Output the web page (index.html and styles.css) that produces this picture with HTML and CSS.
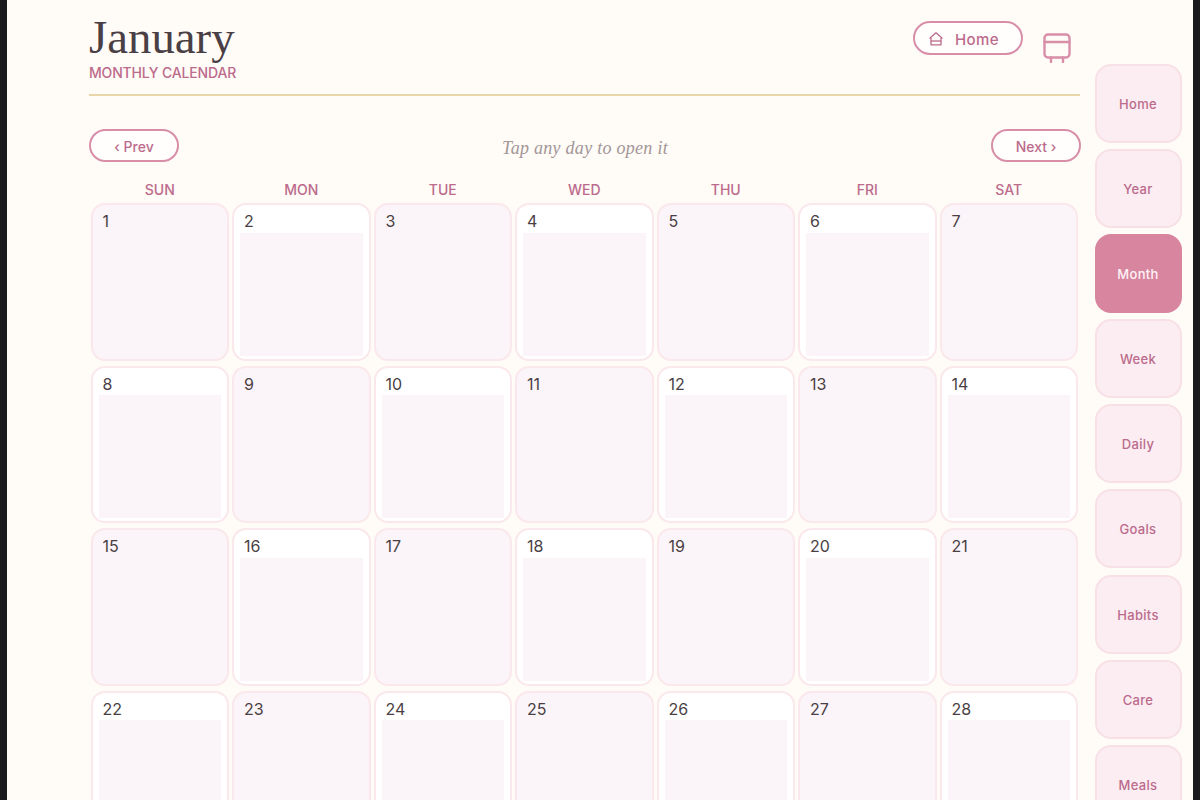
FILE: index.html
```html
<!DOCTYPE html>
<html lang="en">
<head>
<meta charset="utf-8">
<title>January - Monthly Calendar</title>
<link rel="stylesheet" href="styles.css">
</head>
<body>
<div class="app">
  <main class="main">
    <header class="head">
      <div class="head-titles">
        <h1 class="title">January</h1>
        <p class="subtitle">MONTHLY CALENDAR</p>
      </div>
      <div class="head-actions">
        <a class="pill pill-home">
          <svg class="home-icon" viewBox="0 0 16 16" fill="none" stroke="currentColor" stroke-width="1.3" stroke-linejoin="round"><path d="M1.5 7.5 8 1.8l6.5 5.7"/><path d="M3 7v6.8h10V7"/><path d="M3 10h10"/></svg>
          <span>Home</span>
        </a>
        <svg class="head-icon" viewBox="0 0 28 30" fill="none" stroke="currentColor" stroke-width="2.4" stroke-linejoin="round" stroke-linecap="round"><rect x="1.5" y="1.5" width="25" height="23" rx="3.5"/><path d="M1.5 9h25"/><path d="M8 24.5V29M20 24.5V29"/></svg>
      </div>
    </header>
    <div class="rule"></div>
    <div class="pager">
      <a class="pill pill-nav">‹ Prev</a>
      <span class="hint">Tap any day to open it</span>
      <a class="pill pill-nav">Next ›</a>
    </div>
    <div class="weekdays">
      <span>SUN</span><span>MON</span><span>TUE</span><span>WED</span><span>THU</span><span>FRI</span><span>SAT</span>
    </div>
    <div class="grid">
      <div class="day pink"><span class="num">1</span><div class="fill"></div></div>
      <div class="day"><span class="num">2</span><div class="fill"></div></div>
      <div class="day pink"><span class="num">3</span><div class="fill"></div></div>
      <div class="day"><span class="num">4</span><div class="fill"></div></div>
      <div class="day pink"><span class="num">5</span><div class="fill"></div></div>
      <div class="day"><span class="num">6</span><div class="fill"></div></div>
      <div class="day pink"><span class="num">7</span><div class="fill"></div></div>
      <div class="day"><span class="num">8</span><div class="fill"></div></div>
      <div class="day pink"><span class="num">9</span><div class="fill"></div></div>
      <div class="day"><span class="num">10</span><div class="fill"></div></div>
      <div class="day pink"><span class="num">11</span><div class="fill"></div></div>
      <div class="day"><span class="num">12</span><div class="fill"></div></div>
      <div class="day pink"><span class="num">13</span><div class="fill"></div></div>
      <div class="day"><span class="num">14</span><div class="fill"></div></div>
      <div class="day pink"><span class="num">15</span><div class="fill"></div></div>
      <div class="day"><span class="num">16</span><div class="fill"></div></div>
      <div class="day pink"><span class="num">17</span><div class="fill"></div></div>
      <div class="day"><span class="num">18</span><div class="fill"></div></div>
      <div class="day pink"><span class="num">19</span><div class="fill"></div></div>
      <div class="day"><span class="num">20</span><div class="fill"></div></div>
      <div class="day pink"><span class="num">21</span><div class="fill"></div></div>
      <div class="day"><span class="num">22</span><div class="fill"></div></div>
      <div class="day pink"><span class="num">23</span><div class="fill"></div></div>
      <div class="day"><span class="num">24</span><div class="fill"></div></div>
      <div class="day pink"><span class="num">25</span><div class="fill"></div></div>
      <div class="day"><span class="num">26</span><div class="fill"></div></div>
      <div class="day pink"><span class="num">27</span><div class="fill"></div></div>
      <div class="day"><span class="num">28</span><div class="fill"></div></div>
    </div>
  </main>
  <aside class="side">
    <nav class="tabs">
      <a class="tab">Home</a>
      <a class="tab">Year</a>
      <a class="tab active">Month</a>
      <a class="tab">Week</a>
      <a class="tab">Daily</a>
      <a class="tab">Goals</a>
      <a class="tab">Habits</a>
      <a class="tab">Care</a>
      <a class="tab">Meals</a>
    </nav>
  </aside>
</div>
</body>
</html>
```
FILE: styles.css
```css
* { box-sizing: border-box; }
html, body { margin: 0; height: 800px; overflow: hidden; }
body {
  background: #fffbf6;
  border-left: 7px solid #1a1a1c;
  border-right: 7px solid #1a1a1c;
  font-family: "Inter", "Noto Sans", sans-serif;
  color: #4a3f44;
}
.app { display: flex; height: 800px; overflow: hidden; }
.main { width: 1074px; flex: none; padding: 0 0 0 82px; }
.head { display: flex; justify-content: space-between; align-items: flex-start; width: 991px; height: 94px; padding-top: 14px; }
.head-titles { display: flex; flex-direction: column; }
.head-actions { display: flex; align-items: flex-start; gap: 20px; padding: 7px 9px 0 0; }
.title {
  margin: 0;
  font-family: "Liberation Serif", serif;
  font-weight: 400;
  font-size: 46.8px;
  line-height: 46px;
  color: #4a3f44;
}
.subtitle { margin: 4px 0 0; font-size: 14px; line-height: 18px; font-weight: 500; color: #bc6b8c; letter-spacing: -0.17px; }
.pill {
  display: flex; align-items: center; justify-content: center;
  border: 2px solid #d88ea8; border-radius: 999px;
  background: #fffefc; color: #bc6b8c; font-weight: 500;
}
.pill-home { width: 110px; height: 34px; gap: 11px; font-size: 15px; letter-spacing: 0.4px; padding: 2px 9px 0 0; }
.home-icon { width: 16px; height: 16px; margin-top: -1px; }
.head-icon { width: 28px; height: 30px; margin-top: 12px; color: #d88ea8; flex: none; }
.rule { height: 2px; width: 991px; background: #e8d6a9; }
.pager { display: flex; justify-content: space-between; align-items: center; width: 992px; margin-top: 32px; height: 34px; }
.pill-nav { width: 90px; height: 33px; font-size: 14px; padding-top: 2px; }
.hint { font-family: "Liberation Serif", serif; font-style: italic; font-size: 18px; letter-spacing: 0.28px; color: #a39699; padding: 6px 0 0 0; }
.weekdays, .grid { display: grid; grid-template-columns: repeat(7, 138.5px); column-gap: 3px; margin-left: 1.5px; }
.weekdays { margin-top: 15px; height: 24px; align-items: center; text-align: center; font-size: 14px; font-weight: 500; color: #bc6b8c; }
.grid { margin-top: 2px; grid-auto-rows: 157.5px; row-gap: 5px; }
.day {
  display: flex; flex-direction: column;
  background: #fff; border: 2px solid #fae8ec; border-radius: 14px;
  padding: 6px 6px 3px;
}
.day.pink { background: #fbf4f8; }
.num { height: 21.5px; padding-left: 4px; font-size: 16px; line-height: 20px; color: #4a3f44; }
.fill { flex: 1; background: #fbf4f8; }
.side { flex: 1; display: flex; flex-direction: column; padding-left: 14px; }
.tabs { display: flex; flex-direction: column; gap: 6.1px; margin-top: 64px; }
.tab {
  display: flex; align-items: center; justify-content: center; flex: none;
  width: 87px; height: 79px;
  background: #fbedf2; border: 2px solid #f8e0e7; border-radius: 16px;
  font-size: 13px; font-weight: 500; letter-spacing: 0.3px; color: #bc6b8c; padding: 1px 1px 0 0;
}
.tab.active { background: #d8859f; border-color: #d8859f; color: #fdf3f6; }
```
